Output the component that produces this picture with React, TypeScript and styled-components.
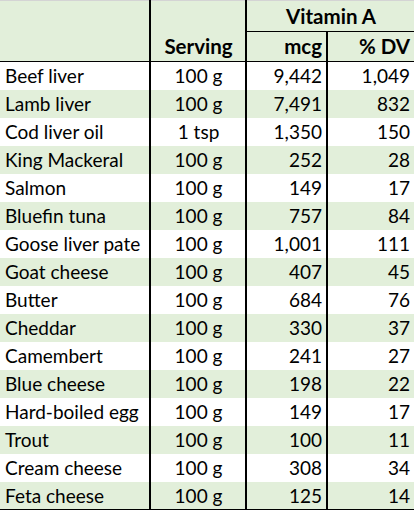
import { FC } from "react";
import styled, { createGlobalStyle } from "styled-components";

const GlobalStyle = createGlobalStyle`
  body {
    margin: 0;
    background: #fff;
  }
`;

const GREEN = "#e2efda";

const Table = styled.table`
  width: 414px;
  border-collapse: collapse;
  table-layout: fixed;
  font-family: "Lato", "Liberation Sans", sans-serif;
  font-size: 19px;
  color: #000;
  border-top: 1px solid #d4d4d4;
`;

const HeadRow = styled.tr<{ $h: number }>`
  height: ${(p) => p.$h}px;
  background: ${GREEN};
`;

const HeadCell = styled.th<{ $align?: string; $left?: boolean; $bottom?: boolean }>`
  padding: 0 4px 3px 5px;
  font-size: 20.5px;
  font-weight: 700;
  text-align: ${(p) => p.$align || "center"};
  vertical-align: bottom;
  white-space: nowrap;
  border-left: ${(p) => (p.$left ? "2px solid #000" : "none")};
  border-bottom: ${(p) => (p.$bottom ? "1px solid #000" : "none")};
`;

const BodyRow = styled.tr<{ $shaded: boolean }>`
  height: 28px;
  background: ${(p) => (p.$shaded ? GREEN : "#fff")};
  &:last-child td {
    border-bottom: 1px solid #000;
  }
`;

const Cell = styled.td<{ $align: string; $left?: boolean }>`
  padding: 0 4px 0 5px;
  text-align: ${(p) => p.$align};
  white-space: nowrap;
  border-left: ${(p) => (p.$left ? "2px solid #000" : "none")};
`;

const rows: [string, string, string, string][] = [
  ["Beef liver", "100 g", "9,442", "1,049"],
  ["Lamb liver", "100 g", "7,491", "832"],
  ["Cod liver oil", "1 tsp", "1,350", "150"],
  ["King Mackeral", "100 g", "252", "28"],
  ["Salmon", "100 g", "149", "17"],
  ["Bluefin tuna", "100 g", "757", "84"],
  ["Goose liver pate", "100 g", "1,001", "111"],
  ["Goat cheese", "100 g", "407", "45"],
  ["Butter", "100 g", "684", "76"],
  ["Cheddar", "100 g", "330", "37"],
  ["Camembert", "100 g", "241", "27"],
  ["Blue cheese", "100 g", "198", "22"],
  ["Hard-boiled egg", "100 g", "149", "17"],
  ["Trout", "100 g", "100", "11"],
  ["Cream cheese", "100 g", "308", "34"],
  ["Feta cheese", "100 g", "125", "14"]
];

const App: FC = () => {
  return (
    <>
      <GlobalStyle />
      <Table>
        <colgroup>
          <col style={{ width: 150 }} />
          <col style={{ width: 96 }} />
          <col style={{ width: 81 }} />
          <col style={{ width: 87 }} />
        </colgroup>
        <thead>
          <HeadRow $h={31}>
            <HeadCell />
            <HeadCell $left />
            <HeadCell $left colSpan={2} $bottom>
              Vitamin A
            </HeadCell>
          </HeadRow>
          <HeadRow $h={30}>
            <HeadCell $bottom />
            <HeadCell $left $bottom>
              Serving
            </HeadCell>
            <HeadCell $left $bottom $align="right">
              mcg
            </HeadCell>
            <HeadCell $left $bottom $align="right">
              % DV
            </HeadCell>
          </HeadRow>
        </thead>
        <tbody>
          {rows.map((r, i) => (
            <BodyRow key={r[0]} $shaded={i % 2 === 1}>
              <Cell $align="left">{r[0]}</Cell>
              <Cell $align="center" $left>
                {r[1]}
              </Cell>
              <Cell $align="right" $left>
                {r[2]}
              </Cell>
              <Cell $align="right" $left>
                {r[3]}
              </Cell>
            </BodyRow>
          ))}
        </tbody>
      </Table>
    </>
  );
};

export default App;
